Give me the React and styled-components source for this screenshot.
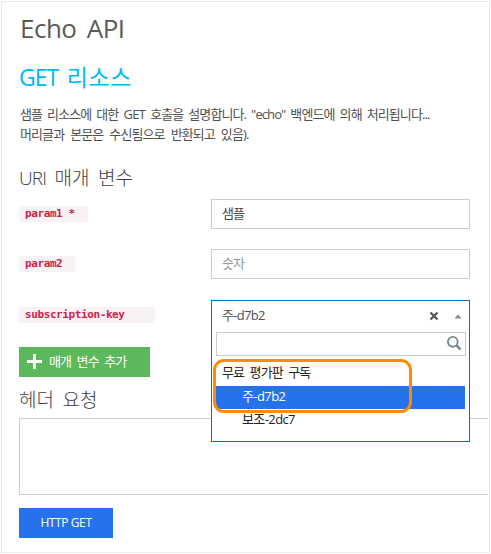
import React from 'react';
import styled, { createGlobalStyle, css } from 'styled-components';

const GlobalStyle = createGlobalStyle`
  * { box-sizing: border-box; }
  body {
    margin: 0;
    background: #fff;
    color: #505050;
    font-family: "Open Sans", "Noto Sans CJK KR", sans-serif;
    font-size: 13px;
  }
`;

const Panel = styled.main`
  width: 489px;
  height: 552px;
  margin: 1px;
  padding-left: 17px;
  border: 1px solid #ebebeb;
  display: flex;
  flex-direction: column;
  align-items: flex-start;
  overflow: hidden;
`;

const heading = css`
  margin: 0;
  white-space: nowrap;
`;

const Title = styled.h1`
  ${heading}
  height: 50px;
  padding: 7px 0 0 1px;
  font-size: 26px;
  font-weight: 400;
  line-height: 38px;
  letter-spacing: -0.5px;
  word-spacing: 4px;
  color: #5a5a5a;
`;

const Operation = styled.h2`
  ${heading}
  height: 50px;
  padding-top: 6px;
  font-size: 23px;
  font-weight: 400;
  line-height: 38px;
  letter-spacing: 0.6px;
  word-spacing: 2px;
  color: #00b9f2;
`;

const Description = styled.p`
  margin: 0;
  height: 62px;
  padding: 2px 0 0 1px;
  line-height: 20px;
  white-space: nowrap;
`;

const Line = styled.span`
  display: block;
  letter-spacing: -0.9px;
  word-spacing: ${(p) => p.$gap || '3px'};
`;

const Latin = styled.span`
  letter-spacing: ${(p) => p.$spacing || '0'};
`;

const Section = styled.h3`
  ${heading}
  height: ${(p) => p.$height};
  padding-top: ${(p) => p.$top || '0'};
  font-size: 19px;
  font-weight: 300;
  line-height: 28px;
  letter-spacing: 0.1px;
  word-spacing: 3.3px;
  color: #3c3c3c;
`;

const Row = styled.div`
  display: grid;
  grid-template-columns: 192px 259px;
  align-items: start;
  height: ${(p) => p.$height || '50px'};
`;

const Code = styled.code`
  justify-self: start;
  width: ${(p) => p.$width};
  height: 16px;
  margin-top: 7px;
  padding-left: 6px;
  background: #f9f2f4;
  color: #c7254e;
  font: bold 11px/16px "DejaVu Sans Mono", monospace;
  letter-spacing: -0.4px;
  white-space: pre;
`;

const Field = styled.div`
  height: 30px;
  padding-left: 10px;
  border: 1px solid #ccc;
  line-height: 27px;
  letter-spacing: -0.9px;
  color: ${(p) => (p.$placeholder ? '#999' : '#444')};
`;

const Select = styled.div`
  position: relative;
  z-index: 1;
  height: 142px;
  border: 1px solid #0072c6;
  background: #fff;
`;

const Current = styled.div`
  display: flex;
  align-items: center;
  height: 31px;
  padding: 0 7px 0 10px;
  line-height: 28px;
`;

const Value = styled.span`
  flex: 1;
  padding-bottom: 4px;
  letter-spacing: -0.7px;
`;

const ClearIcon = styled.svg`
  width: 10px;
  height: 10px;
  margin: 0 15px 1px 0;
`;

const ArrowIcon = styled.svg`
  width: 8px;
  height: 5px;
  margin-bottom: 1px;
`;

const Search = styled.div`
  display: flex;
  justify-content: flex-end;
  width: 250px;
  height: 24px;
  margin-left: 4px;
  padding: 2px 3px 0 0;
  border: 1px solid #ccc;
`;

const Options = styled.ul`
  width: 249px;
  margin: 5px 0 0 4px;
  padding: 0;
  list-style: none;
  color: #222;
  letter-spacing: -0.6px;
`;

const GroupLabel = styled.li`
  height: 25px;
  padding-left: 6px;
  line-height: 23px;
  letter-spacing: -0.9px;
  word-spacing: 3px;
`;

const Option = styled.li`
  height: 23px;
  padding-left: 26px;
  line-height: 20px;
  background: ${(p) => (p.$selected ? '#2672ec' : 'transparent')};
  color: ${(p) => (p.$selected ? '#fff' : '#222')};
`;

const Highlight = styled.div`
  position: absolute;
  left: 1px;
  top: 58px;
  width: 199px;
  height: 54px;
  border: 3px solid #ff8c00;
  border-radius: 11px;
`;

const AddButton = styled.button`
  display: flex;
  align-items: center;
  width: 131px;
  height: 30px;
  padding: 0 0 0 8px;
  border: 0;
  background: #5cb85c;
  color: #fff;
  font: inherit;
  letter-spacing: -0.9px;
  word-spacing: 3px;
  white-space: nowrap;
`;

const AddLabel = styled.span`
  padding-bottom: 3px;
`;

const PlusIcon = styled.svg`
  width: 15px;
  height: 15px;
  margin: 0 7px 1px 0;
`;

const HeaderBox = styled.div`
  width: 469px;
  height: 77px;
  border: 1px solid #ccc;
  border-right: 0;
`;

const SendButton = styled.button`
  width: 94px;
  height: 30px;
  margin-top: 13px;
  padding: 0 0 1px;
  border: 0;
  background: #2672ec;
  color: #fff;
  font: 12px "Open Sans", sans-serif;
  letter-spacing: -0.4px;
`;

export default function App() {
  return (
    <>
      <GlobalStyle />
      <Panel>
        <Title>Echo API</Title>
        <Operation>
          <Latin $spacing="-1px">GET</Latin> 리소스
        </Operation>
        <Description>
          <Line $gap="2.5px">
            샘플 리소스에 대한 <Latin $spacing="-0.7px">GET</Latin> 호출을 설명합니다.{' '}
            <Latin $spacing="-0.9px">"echo"</Latin> 백엔드에 의해 처리됩니다...
          </Line>
          <Line $gap="3.5px">머리글과 본문은 수신됨으로 반환되고 있음).</Line>
        </Description>
        <Section $height="35px">
          <Latin $spacing="-0.9px">URI</Latin> 매개 변수
        </Section>
        <Row>
          <Code $width="69px">param1 *</Code>
          <Field>샘플</Field>
        </Row>
        <Row $height="51px">
          <Code $width="56px">param2</Code>
          <Field $placeholder>숫자</Field>
        </Row>
        <Row $height="47px">
          <Code $width="136px">subscription-key</Code>
          <Select>
            <Current>
              <Value>주-d7b2</Value>
              <ClearIcon viewBox="0 0 10 10">
                <path d="M1.5 1.5 8.5 8.5M8.5 1.5 1.5 8.5" stroke="#555" strokeWidth="2.2" />
              </ClearIcon>
              <ArrowIcon viewBox="0 0 8 5">
                <path d="M4 0.5 7.5 4.5H0.5Z" fill="#888" />
              </ArrowIcon>
            </Current>
            <Search>
              <svg width="16" height="16" viewBox="0 0 16 16" fill="none" stroke="#7a8b9c">
                <circle cx="6.8" cy="6.8" r="4.9" strokeWidth="1.9" />
                <path d="M10.2 10.2 14.5 14.5" strokeWidth="2.6" />
              </svg>
            </Search>
            <Options>
              <GroupLabel>무료 평가판 구독</GroupLabel>
              <Option $selected>주-d7b2</Option>
              <Option>보조-2dc7</Option>
            </Options>
            <Highlight />
          </Select>
        </Row>
        <AddButton>
          <PlusIcon viewBox="0 0 15 15">
            <path d="M7.5 0V15M0 7.5H15" stroke="#fff" strokeWidth="3" />
          </PlusIcon>
          <AddLabel>매개 변수 추가</AddLabel>
        </AddButton>
        <Section $height="41px" $top="9px">헤더 요청</Section>
        <HeaderBox />
        <SendButton>HTTP GET</SendButton>
      </Panel>
    </>
  );
}
